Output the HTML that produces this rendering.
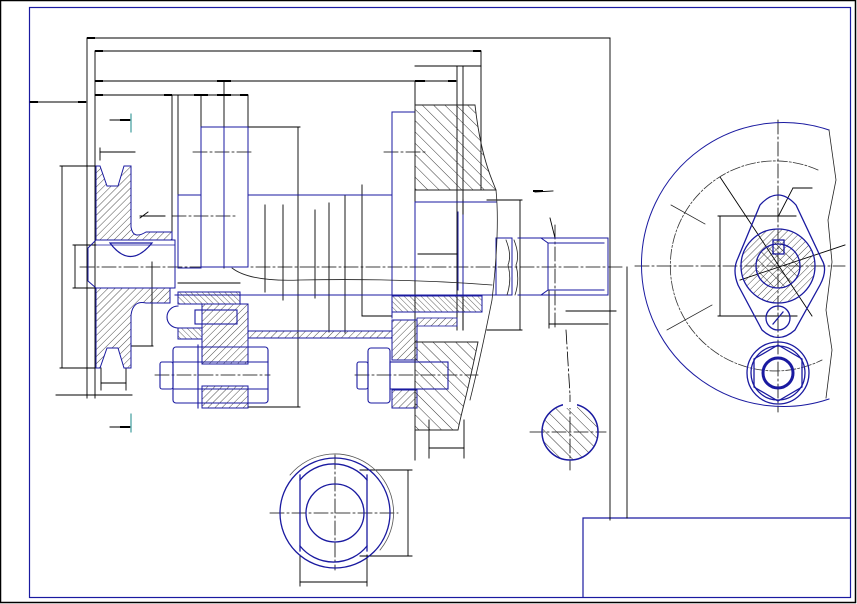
<!DOCTYPE html>
<html><head><meta charset="utf-8"><style>
html,body{margin:0;padding:0;background:#fff;width:857px;height:604px;overflow:hidden}
svg{display:block}
</style></head><body>
<svg width="857" height="604" viewBox="0 0 857 604" xmlns="http://www.w3.org/2000/svg" fill="none" stroke-linecap="square">
<defs>
<pattern id="h1" width="5" height="5" patternUnits="userSpaceOnUse" patternTransform="rotate(45)"><line x1="0" y1="0" x2="0" y2="5" stroke="#222" stroke-width="0.8"/></pattern>
<pattern id="h2" width="8" height="8" patternUnits="userSpaceOnUse" patternTransform="rotate(-45)"><line x1="0" y1="0" x2="0" y2="8" stroke="#222" stroke-width="0.9"/></pattern>
<pattern id="h3" width="4" height="4" patternUnits="userSpaceOnUse" patternTransform="rotate(-45)"><line x1="0" y1="0" x2="0" y2="4" stroke="#222" stroke-width="0.7"/></pattern>
</defs>
<rect x="0.5" y="0.5" width="855" height="602" stroke="#000" stroke-width="1.5"/>
<rect x="29.5" y="7.5" width="821" height="590" stroke="#1a1aa0" stroke-width="1.2"/>
<polyline points="583,597 583,518 850,518" stroke="#1a1aa0" stroke-width="1.2"/>

<g stroke="#000" stroke-width="0.9">
<line x1="87" y1="38" x2="610" y2="38"/>
<line x1="95" y1="51" x2="481" y2="51"/>
<line x1="95" y1="81" x2="457" y2="81"/>
<line x1="415" y1="66" x2="481" y2="66"/>
<line x1="95" y1="95" x2="248" y2="95"/>
<line x1="30" y1="102" x2="86" y2="102"/>
<line x1="87" y1="38" x2="87" y2="398"/>
<line x1="95" y1="51" x2="95" y2="398"/>
<line x1="610" y1="38" x2="610" y2="520"/>
<line x1="481" y1="51" x2="481" y2="190"/>
<line x1="457" y1="66" x2="457" y2="330"/>
<line x1="463" y1="66" x2="463" y2="330"/>
<line x1="415" y1="81" x2="415" y2="460"/>
<line x1="178" y1="95" x2="178" y2="240"/>
<line x1="172" y1="95" x2="172" y2="240"/>
<line x1="201" y1="95" x2="201" y2="130"/>
<line x1="224" y1="82" x2="224" y2="268"/>
<line x1="248" y1="95" x2="248" y2="130"/>
<line x1="201" y1="127" x2="300" y2="127"/>
<line x1="298" y1="127" x2="298" y2="407"/>
<line x1="248" y1="407" x2="300" y2="407"/>
<line x1="392" y1="112" x2="415" y2="112"/>
<line x1="60" y1="166" x2="96" y2="166"/>
<line x1="62" y1="166" x2="62" y2="368"/>
<line x1="60" y1="368" x2="96" y2="368"/>
<line x1="73" y1="245" x2="96" y2="245"/>
<line x1="75" y1="245" x2="75" y2="288"/>
<line x1="73" y1="288" x2="96" y2="288"/>
<line x1="56" y1="395" x2="132" y2="395"/>
<line x1="100" y1="152" x2="135" y2="152"/>
<line x1="100" y1="148" x2="100" y2="160"/>
<line x1="101" y1="383" x2="126" y2="383"/>
<line x1="101" y1="368" x2="101" y2="390"/>
<line x1="126" y1="368" x2="126" y2="390"/>
<line x1="110" y1="120" x2="130" y2="120"/>
<line x1="110" y1="427" x2="130" y2="427"/>
<line x1="152" y1="262" x2="152" y2="346"/>
<line x1="131" y1="346" x2="153" y2="346"/>
<line x1="140" y1="216" x2="165" y2="216"/>
<line x1="178" y1="283" x2="240" y2="283"/>
<line x1="265" y1="205" x2="265" y2="292"/>
<line x1="283" y1="205" x2="283" y2="300"/>
<line x1="315" y1="210" x2="315" y2="298"/>
<line x1="329" y1="203" x2="329" y2="332"/>
<line x1="345" y1="195" x2="345" y2="333"/>
<line x1="362" y1="185" x2="362" y2="316"/>
<line x1="362" y1="316" x2="392" y2="316"/>
<line x1="418" y1="254" x2="458" y2="254"/>
<line x1="487" y1="200" x2="522" y2="200"/>
<line x1="520" y1="200" x2="520" y2="330"/>
<line x1="487" y1="330" x2="522" y2="330"/>
<line x1="463" y1="200" x2="463" y2="330"/>
<line x1="429" y1="448" x2="464" y2="448"/>
<line x1="429" y1="420" x2="429" y2="458"/>
<line x1="464" y1="420" x2="464" y2="458"/>
<line x1="549" y1="324" x2="608" y2="324"/>
<line x1="549" y1="290" x2="549" y2="328"/>
<line x1="566" y1="311" x2="616" y2="311"/>
<line x1="535" y1="192" x2="553" y2="191"/>
<line x1="550" y1="218" x2="555" y2="238"/>
<line x1="627" y1="267" x2="627" y2="518"/>
<line x1="408" y1="470" x2="408" y2="556"/>
<line x1="360" y1="470" x2="412" y2="470"/>
<line x1="360" y1="556" x2="412" y2="556"/>
<line x1="300" y1="582" x2="367" y2="582"/>
<line x1="300" y1="555" x2="300" y2="586"/>
<line x1="367" y1="555" x2="367" y2="586"/>
<line x1="718" y1="216" x2="796" y2="216"/>
<line x1="720" y1="216" x2="720" y2="316"/>
<line x1="718" y1="316" x2="797" y2="316"/>
<line x1="720" y1="177" x2="812" y2="316"/>
<line x1="740" y1="280" x2="845" y2="245"/>
<line x1="779" y1="215" x2="793" y2="188"/>
<line x1="793" y1="188" x2="812" y2="188"/>
<line x1="140" y1="218" x2="148" y2="212"/>
</g>
<g fill="#000">
<rect x="87" y="37" width="8" height="2"/><rect x="95" y="50" width="8" height="2"/><rect x="473" y="50" width="8" height="2"/>
<rect x="95" y="80" width="8" height="2"/><rect x="217" y="80" width="14" height="2"/><rect x="415" y="80" width="10" height="2"/><rect x="448" y="80" width="8" height="2"/>
<rect x="95" y="94" width="8" height="2"/><rect x="164" y="94" width="8" height="2"/><rect x="194" y="94" width="14" height="2"/><rect x="217" y="94" width="14" height="2"/><rect x="240" y="94" width="8" height="2"/>
<rect x="30" y="101" width="8" height="2"/><rect x="78" y="101" width="8" height="2"/>
<rect x="120" y="119" width="10" height="2"/><rect x="120" y="426" width="10" height="2"/>
<rect x="533" y="190" width="10" height="2"/>
</g>
<g stroke="#1a8a8a" stroke-width="1"><line x1="131" y1="114" x2="131" y2="132"/><line x1="131" y1="414" x2="131" y2="432"/></g>

<g stroke="#000" stroke-width="0.8" stroke-dasharray="14,3,2,3">
<line x1="80" y1="267" x2="625" y2="267"/>
<line x1="193" y1="152" x2="253" y2="152"/>
<line x1="172" y1="216" x2="236" y2="216"/>
<line x1="384" y1="152" x2="428" y2="152"/>
<line x1="155" y1="375" x2="270" y2="375"/>
<line x1="355" y1="375" x2="478" y2="375"/>
<line x1="555" y1="225" x2="555" y2="330"/>
<line x1="566" y1="330" x2="570" y2="395"/>
<line x1="570" y1="395" x2="570" y2="470"/>
<line x1="530" y1="432" x2="606" y2="432"/>
<line x1="270" y1="513" x2="398" y2="513"/>
<line x1="335" y1="455" x2="335" y2="570"/>
<line x1="635" y1="266" x2="845" y2="266"/>
<line x1="778" y1="120" x2="778" y2="412"/>
</g>

<path d="M96,166 L100,166 L107,186 L118,186 L124,166 L131,166 L131,227 Q133,240 146,232 L172,232 L172,240 L96,240 Z" fill="url(#h1)" stroke="#1a1aa0" stroke-width="1"/>
<path d="M96,288 L170,288 L170,303 L146,303 Q133,300 131,315 L131,368 L124,368 L118,348 L107,348 L100,368 L96,368 Z" fill="url(#h1)" stroke="#1a1aa0" stroke-width="1"/>
<path d="M96,240 L175,240 L175,288 L96,288 L88,281 L88,248 Z" stroke="#1a1aa0" stroke-width="1"/>
<path d="M110,243 Q130,270 152,243 Z" stroke="#1a1aa0" stroke-width="1.2" fill="#fff"/>
<line x1="96" y1="245" x2="175" y2="245" stroke="#1a1aa0" stroke-width="0.8"/>
<g stroke="#1a1aa0" stroke-width="1">
<rect x="178" y="195" width="23" height="73"/>
<rect x="201" y="127" width="47" height="140"/>
<line x1="224" y1="127" x2="224" y2="267"/>
<polyline points="248,195 392,195 392,112 415,112"/>
<line x1="392" y1="112" x2="392" y2="318"/>
<line x1="415" y1="202" x2="496" y2="202"/>
<line x1="415" y1="202" x2="415" y2="280"/>
<rect x="496" y="238" width="16" height="57"/>
<path d="M518,238 L608,238 L608,295 L518,295"/>
<path d="M541,238 L548,243 L548,290 L541,295"/>
<line x1="548" y1="243" x2="604" y2="243"/>
<line x1="548" y1="290" x2="604" y2="290"/>
<line x1="463" y1="215" x2="463" y2="295"/>
<line x1="175" y1="295" x2="496" y2="295"/>
<line x1="458" y1="212" x2="458" y2="290"/>
</g>
<path d="M232,268 Q250,282 300,280 Q400,278 492,285" stroke="#222" stroke-width="0.8"/>
<path d="M506,240 Q512,255 508,265 Q512,280 507,295 M514,240 Q520,255 516,265 Q520,280 515,295" stroke="#222" stroke-width="0.8"/>
<rect x="178" y="292" width="62" height="12" fill="url(#h3)" stroke="#1a1aa0" stroke-width="1"/>
<rect x="178" y="328" width="24" height="11" fill="url(#h3)" stroke="#1a1aa0" stroke-width="1"/>
<rect x="202" y="304" width="46" height="60" fill="url(#h1)" stroke="#1a1aa0" stroke-width="1"/>
<rect x="202" y="386" width="46" height="22" fill="url(#h1)" stroke="#1a1aa0" stroke-width="1"/>
<rect x="248" y="331" width="144" height="7" fill="url(#h1)" stroke="#1a1aa0" stroke-width="1"/>
<rect x="392" y="296" width="90" height="16" fill="url(#h3)" stroke="#1a1aa0" stroke-width="1"/>
<rect x="392" y="320" width="25" height="40" fill="url(#h1)" stroke="#1a1aa0" stroke-width="1"/>
<rect x="392" y="390" width="25" height="18" fill="url(#h1)" stroke="#1a1aa0" stroke-width="1"/>
<rect x="417" y="318" width="40" height="8" fill="url(#h1)" stroke="#1a1aa0" stroke-width="0.8"/>
<path d="M415,105 L475,105 Q480,150 492,180 L496,190 L415,190 Z" fill="url(#h2)" stroke="#222" stroke-width="0.9"/>
<path d="M415,342 L478,342 Q470,380 465,400 Q460,420 458,430 L415,430 Z" fill="url(#h2)" stroke="#222" stroke-width="0.9"/>
<path d="M496,190 Q500,230 492,300 Q480,360 470,400" stroke="#222" stroke-width="0.8"/>
<line x1="415" y1="190" x2="496" y2="190" stroke="#222" stroke-width="0.8"/>
<g stroke="#1a1aa0" stroke-width="1.1">
<rect x="173" y="347" width="95" height="56" rx="3"/>
<rect x="160" y="362" width="13" height="27" rx="2"/>
<line x1="173" y1="362" x2="268" y2="362"/><line x1="173" y1="389" x2="268" y2="389"/>
<line x1="198" y1="345" x2="198" y2="408"/>
<path d="M178,306 A8,8 0 0 0 178,328"/>
<rect x="195" y="310" width="42" height="14"/>
<rect x="368" y="348" width="22" height="55" rx="3"/>
<rect x="357" y="362" width="11" height="27" rx="2"/>
<rect x="390" y="362" width="58" height="27"/>
</g>
<g stroke="#1a1aa0" stroke-width="1.3">
<circle cx="335" cy="513" r="55"/>
<circle cx="335" cy="513" r="29"/>
<path d="M300,475 L300,551 M367,475 L367,551"/>
<path d="M300,480 A43,43 0 0 1 367,480 M300,546 A43,43 0 0 0 367,546"/>
</g>
<path d="M290,475 A55,55 0 0 1 380,550" stroke="#555" stroke-width="0.8"/>
<circle cx="570" cy="432" r="28" fill="url(#h2)" stroke="#1a1aa0" stroke-width="1.5"/>
<rect x="563" y="402" width="14" height="6" fill="#fff"/>
<path d="M829,130 A142,142 0 1 0 829,399" stroke="#1a1aa0" stroke-width="1"/>
<path d="M818,170 A105,105 0 1 0 822,360" stroke="#333" stroke-width="0.8" stroke-dasharray="10,2,2,2"/>
<path d="M829,130 L836,180 L828,220 L832,262 L826,310 L832,350 L826,398" stroke="#222" stroke-width="0.8"/>
<g stroke="#222" stroke-width="0.8"><line x1="671" y1="205" x2="705" y2="224"/><line x1="667" y1="330" x2="712" y2="305"/></g>
<g stroke="#1a1aa0" stroke-width="1.3">
<path d="M760,205 Q778,185 796,205 L822,260 Q828,270 820,285 L795,330 Q778,345 762,330 L738,285 Q732,270 738,258 Z"/>
<circle cx="778" cy="266" r="37" fill="url(#h1)"/>
<circle cx="778" cy="266" r="22" fill="url(#h2)"/>
<rect x="773" y="240" width="11" height="14" fill="url(#h3)"/>
<circle cx="778" cy="318" r="12"/>
<line x1="773" y1="324" x2="783" y2="312"/>
<circle cx="778" cy="373" r="31"/>
<circle cx="778" cy="373" r="27"/>
<path d="M778,345 L802,359 L802,387 L778,401 L754,387 L754,359 Z"/>
<circle cx="778" cy="373" r="15" stroke-width="3"/>
</g>
</svg>
</body></html>
